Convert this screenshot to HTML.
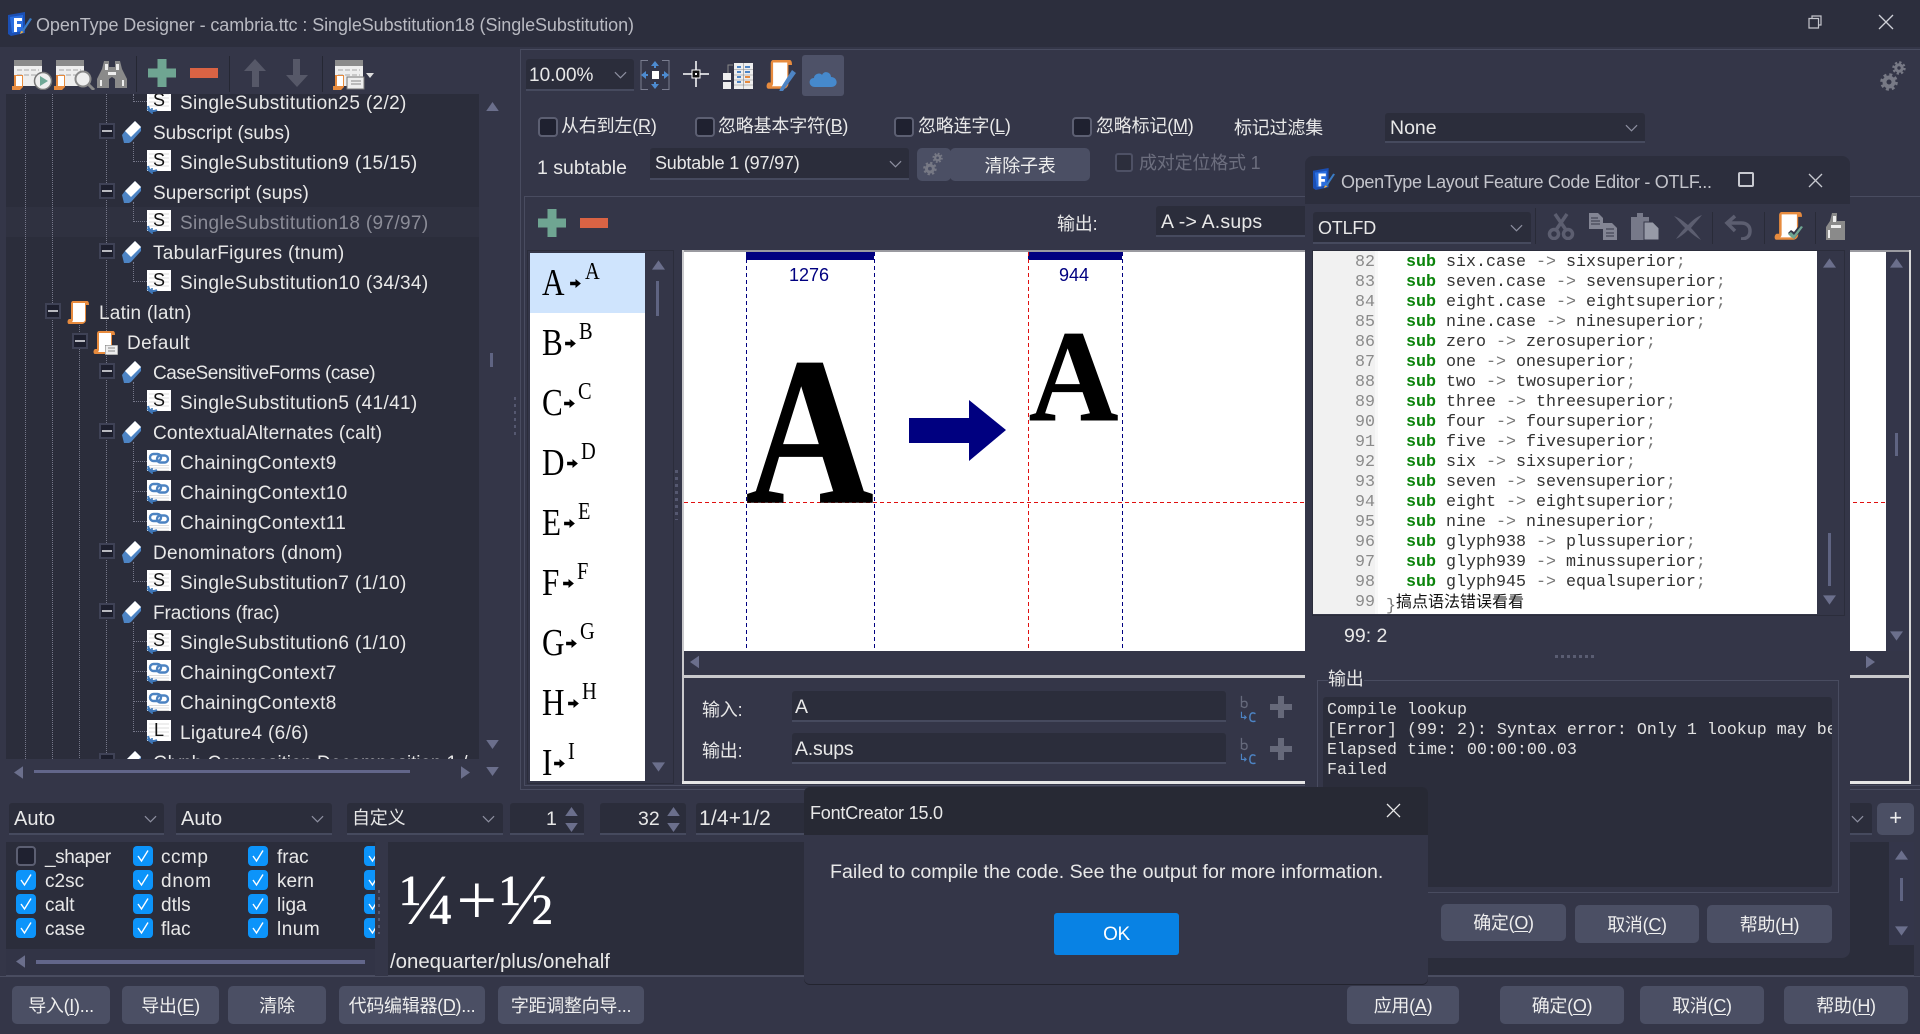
<!DOCTYPE html>
<html><head><meta charset="utf-8"><title>OpenType Designer</title>
<style>
html,body{margin:0;padding:0;width:1920px;height:1034px;overflow:hidden;background:#343648}
*{box-sizing:border-box}
.b,.t,svg.a{position:absolute}
.t{white-space:nowrap;font:18px/24px "Liberation Sans","Noto Sans CJK SC",sans-serif;color:#e8e8e8;letter-spacing:-.2px}
.tr{font-size:19px;letter-spacing:.35px;margin-top:2px}
.c{font-size:19.5px;letter-spacing:0;margin-top:1px}
.d{background:#2b2d3b}
.cb{position:absolute;background:#2b2d3b;border-bottom:2px solid #464a5e;border-radius:3px 3px 0 0}
.btn{position:absolute;background:#4b4f64;border-radius:5px;color:#eee;text-align:center;white-space:nowrap;font:18px/41px "Liberation Sans","Noto Sans CJK SC",sans-serif;letter-spacing:-.3px}
.btn u{text-underline-offset:2px}
.ck{position:absolute;width:20px;height:20px;border-radius:4px;background:#0c94fa}
.ck svg{position:absolute;left:3px;top:3px}
.un{position:absolute;width:20px;height:20px;border-radius:4px;background:#1f2130;border:2px solid #5c5f72}
.ex{position:absolute;width:16px;height:16px;background:#1d1f2e;border:2px solid #3f4256}
.ex:after{content:"";position:absolute;left:1px;top:5px;width:10px;height:2px;background:#b8b9c0}
.dv{position:absolute;width:0;border-left:1px dotted #76788a}
.dh{position:absolute;height:0;border-top:1px dotted #76788a}
.lt{position:absolute;width:14px;text-align:center;font:18px/18px "Liberation Sans",sans-serif;color:#111}
.g{position:absolute;font:38px/40px "Liberation Serif",serif;color:#000;transform:scaleX(.82);transform-origin:0 0}
.s{position:absolute;font:24px/24px "Liberation Serif",serif;color:#000;transform:scaleX(.85);transform-origin:0 0;margin-top:1px}
pre{margin:0;position:absolute;font:16.67px/20px "Liberation Mono",monospace}
pre b{color:#0a830a}
pre i{font-style:normal;color:#777}
</style></head><body>
<svg width="0" height="0" style="position:absolute">
<defs>
<symbol id="chev" viewBox="0 0 14 8"><path d="M1 1l6 6 6-6" fill="none" stroke="#8d8fa0" stroke-width="1.3"/></symbol>
<symbol id="fe" viewBox="0 0 20 24"><path d="M0 15L3 11 13 1l6 6v4L9 22l-2 1H2z" fill="#4d84c4"/><path d="M3 11L13 1l6 6L9 17z" fill="#fff"/></symbol>
<symbol id="lk" viewBox="0 0 25 24"><rect x="1" width="24" height="21" fill="#fff"/><path d="M3 4h20M3 8h20M3 12h20M3 16h20" stroke="#ddd" stroke-width="1"/><path d="M2 16c1 5 5 6 9 4" fill="none" stroke="#3f78ba" stroke-width="2"/><path d="M1 19l5 4v-5" fill="none" stroke="#3f78ba" stroke-width="1.6"/></symbol>
<symbol id="ch" viewBox="0 0 25 24"><rect x="1" width="24" height="21" fill="#fff"/><path d="M3 15.500h20M3 18h20M3 20.500h20" stroke="#ddd" stroke-width="1"/><rect x="4" y="4" width="11" height="7" rx="3.500" fill="none" stroke="#4c83c2" stroke-width="2.400"/><rect x="11" y="5.500" width="11" height="7" rx="3.500" fill="none" stroke="#4c83c2" stroke-width="2.400"/><path d="M2 16c1 5 5 6 9 4" fill="none" stroke="#3f78ba" stroke-width="2"/><path d="M1 19l5 4v-5" fill="none" stroke="#3f78ba" stroke-width="1.6"/></symbol>
<symbol id="sc" viewBox="0 0 22 24" preserveAspectRatio="none"><path d="M6 0h14c2 0 2 3 2 4h-3v15c0 2-2 4-4 4H2c-2 0-2-4 0-5h2V3c0-2 1-3 2-3z" fill="#e78b3e"/><path d="M6 2h12v17c0 1-1 2-2 2H5c1-1 1-2 1-3z" fill="#fff"/></symbol>
<symbol id="win" viewBox="0 0 42 30"><rect x="3" width="28" height="6" fill="#8b8b8b"/><rect x="3" y="6" width="28" height="20" fill="#eee"/><path d="M6 10h22M6 15h22" stroke="#a5a5a5" stroke-dasharray="5 2"/><path d="M3 15h9v12l-3 3H1v-4h2z" fill="#e78b3e"/><path d="M5 16h6v10H5z" fill="#fff"/></symbol>
<symbol id="ck" viewBox="0 0 14 14"><path d="M2 7l3.500 5L12 1.500" fill="none" stroke="#fff" stroke-width="1.400"/></symbol>
<symbol id="tup" viewBox="0 0 14 10"><path d="M7 0l7 10H0z" fill="#6b6f8c"/></symbol>
<symbol id="tdn" viewBox="0 0 14 10"><path d="M7 10L0 0h14z" fill="#6b6f8c"/></symbol>
<symbol id="tlf" viewBox="0 0 10 14"><path d="M0 7l10-7v14z" fill="#6b6f8c"/></symbol>
<symbol id="trt" viewBox="0 0 10 14"><path d="M10 7L0 0v14z" fill="#6b6f8c"/></symbol>
<symbol id="ar" viewBox="0 0 12 10"><path d="M0 3h6V0l6 5-6 5V7H0z" fill="#000"/></symbol>
<symbol id="bc" viewBox="0 0 18 30"><path d="M2 1v12M2 8c2-2 6-2 6 2s-4 4-6 2" fill="none" stroke="#666a7c" stroke-width="1.4"/><path d="M2 18v6h4M5 22l2 2-2 2" fill="none" stroke="#4d84c4" stroke-width="1.2"/><path d="M17 20c-4-2-6 0-6 4s2 5 6 4" fill="none" stroke="#4d84c4" stroke-width="1.6"/></symbol>
<symbol id="pl" viewBox="0 0 22 22"><path d="M8 0h6v8h8v6h-8v8H8v-8H0V8h8z" fill="#66697a"/></symbol>
<symbol id="gear" viewBox="0 0 26 32" fill="none" stroke="#777985"><circle cx="9" cy="22" r="4.500" stroke-width="4"/><circle cx="9" cy="22" r="7.500" stroke-width="2.600" stroke-dasharray="3 2.900"/><circle cx="19" cy="8" r="3.200" stroke-width="3"/><circle cx="19" cy="8" r="5.600" stroke-width="2.200" stroke-dasharray="2.300 2.100"/></symbol>
<symbol id="app" viewBox="0 0 24 24"><path d="M0 3l17-3v21L3 24 0 22z" fill="#1b4fb4"/><path d="M2 5l13-2v16L4 21z" fill="#2a6ee0"/><path d="M6 6h8v3H9v3h4v3H9v5H6z" fill="#fff"/><path d="M14 18l8-12 2 1-8 12-3 2z" fill="#3a7bc4"/><path d="M13 19l3 1-4 2z" fill="#f0b040"/></symbol>
</defs></svg>

<!-- title bar -->
<div class="b" style="left:0;top:0;width:1920px;height:47px;background:#2c2e3d"></div>
<svg class="a" style="left:8px;top:12px" width="24" height="24"><use href="#app"/></svg>
<div class="t" style="left:36px;top:13px;color:#b9bac2;letter-spacing:-.085px">OpenType Designer - cambria.ttc : SingleSubstitution18 (SingleSubstitution)</div>
<svg class="a" style="left:1807px;top:14px" width="16" height="16" fill="none" stroke="#c4c5cc" stroke-width="1.200"><path d="M2 4.500h9.500V14H2zM5 4V2h9v9h-2.500"/></svg>
<svg class="a" style="left:1878px;top:14px" width="16" height="16" fill="none" stroke="#d0d1d8" stroke-width="1.300"><path d="M1 1l14 14M15 1L1 15"/></svg>

<!-- left toolbar -->
<svg class="a" style="left:11px;top:60px" width="42" height="30"><use href="#win"/><circle cx="32" cy="21" r="8.500" fill="#eee" stroke="#777" stroke-width="1.500"/><path d="M29 16l8 5-8 5z" fill="#6fa896"/></svg>
<svg class="a" style="left:53px;top:60px" width="42" height="30"><use href="#win"/><circle cx="30" cy="19" r="7.500" fill="#eee" stroke="#888" stroke-width="2"/><path d="M35 24l6 6" stroke="#888" stroke-width="3"/></svg>
<svg class="a" style="left:97px;top:61px" width="30" height="27"><path d="M7 0h5v6h6V0h5l2 8 5 10v9H18v-9l-3-2-3 2v9H0v-9l5-10z" fill="#8a8a8a"/><path d="M8 3h3v6H8zM19 3h3v6h-3zM3 19h2v6H3zM25 19h2v6h-2zM11 11h8v3h-8z" fill="#eee"/></svg>
<div class="b" style="left:136px;top:56px;width:1px;height:36px;background:#252733"></div>
<svg class="a" style="left:148px;top:59px" width="28" height="28"><path d="M9.500 0h9v9.500H28v9h-9.500V28h-9v-9.500H0v-9h9.500z" fill="#6fa592"/></svg>
<div class="b" style="left:190px;top:68px;width:28px;height:10px;background:#d96344"></div>
<div class="b" style="left:229px;top:56px;width:1px;height:36px;background:#252733"></div>
<svg class="a" style="left:244px;top:59px" width="22" height="28"><path d="M11 0l11 12h-7v16H8V12H0z" fill="#565868"/></svg>
<svg class="a" style="left:286px;top:59px" width="22" height="28"><path d="M11 28L0 16h7V0h7v16h8z" fill="#565868"/></svg>
<div class="b" style="left:322px;top:56px;width:1px;height:36px;background:#252733"></div>
<svg class="a" style="left:332px;top:60px" width="42" height="30"><use href="#win"/><rect x="15" y="17" width="17" height="12" fill="#eee" stroke="#777"/><path d="M19 21h10M19 24h10" stroke="#888"/></svg>
<svg class="a" style="left:366px;top:73px" width="8" height="5"><path d="M0 0h8L4 5z" fill="#ddd"/></svg>

<!-- tree -->
<div class="b d" style="left:6px;top:94px;width:473px;height:665px"></div>
<div class="b" style="left:0;top:0;width:1920px;height:1034px;clip-path:inset(94px 1441px 275px 6px)">
<div class="b" style="left:6px;top:207px;width:473px;height:30px;background:#2f3140"></div>
<div class="dv" style="left:25px;top:94px;height:665px"></div>
<div class="dv" style="left:52px;top:94px;height:665px"></div>
<div class="dv" style="left:79px;top:320px;height:440px"></div>
<div class="dv" style="left:106px;top:94px;height:665px"></div>
<div class="dv" style="left:133px;top:94px;height:8px"></div><div class="dh" style="left:133px;top:101px;width:14px"></div>
<div class="dv" style="left:133px;top:142px;height:20px"></div><div class="dh" style="left:133px;top:161px;width:14px"></div>
<div class="dv" style="left:133px;top:202px;height:20px"></div><div class="dh" style="left:133px;top:221px;width:14px"></div>
<div class="dv" style="left:133px;top:262px;height:20px"></div><div class="dh" style="left:133px;top:281px;width:14px"></div>
<div class="dv" style="left:133px;top:382px;height:20px"></div><div class="dh" style="left:133px;top:401px;width:14px"></div>
<div class="dv" style="left:133px;top:442px;height:80px"></div><div class="dh" style="left:133px;top:461px;width:14px"></div><div class="dh" style="left:133px;top:491px;width:14px"></div><div class="dh" style="left:133px;top:521px;width:14px"></div>
<div class="dv" style="left:133px;top:562px;height:20px"></div><div class="dh" style="left:133px;top:581px;width:14px"></div>
<div class="dv" style="left:133px;top:622px;height:110px"></div><div class="dh" style="left:133px;top:641px;width:14px"></div><div class="dh" style="left:133px;top:671px;width:14px"></div><div class="dh" style="left:133px;top:701px;width:14px"></div><div class="dh" style="left:133px;top:731px;width:14px"></div>

<svg class="a" style="left:146px;top:90px" width="25" height="24"><use href="#lk"/></svg><div class="lt" style="left:152px;top:91px">S</div><div class="t tr" style="left:180px;top:90px">SingleSubstitution25 (2/2)</div>
<div class="ex" style="left:99px;top:123px"></div><svg class="a" style="left:122px;top:120px" width="20" height="24"><use href="#fe"/></svg><div class="t tr" style="left:153px;top:120px;letter-spacing:0">Subscript (subs)</div>
<svg class="a" style="left:146px;top:150px" width="25" height="24"><use href="#lk"/></svg><div class="lt" style="left:152px;top:151px">S</div><div class="t tr" style="left:180px;top:150px">SingleSubstitution9 (15/15)</div>
<div class="ex" style="left:99px;top:183px"></div><svg class="a" style="left:122px;top:180px" width="20" height="24"><use href="#fe"/></svg><div class="t tr" style="left:153px;top:180px;letter-spacing:.1px">Superscript (sups)</div>
<svg class="a" style="left:146px;top:210px" width="25" height="24"><use href="#lk"/></svg><div class="lt" style="left:152px;top:211px">S</div><div class="t tr" style="left:180px;top:210px;color:#8b8c97">SingleSubstitution18 (97/97)</div>
<div class="ex" style="left:99px;top:243px"></div><svg class="a" style="left:122px;top:240px" width="20" height="24"><use href="#fe"/></svg><div class="t tr" style="left:153px;top:240px;letter-spacing:.27px">TabularFigures (tnum)</div>
<svg class="a" style="left:146px;top:270px" width="25" height="24"><use href="#lk"/></svg><div class="lt" style="left:152px;top:271px">S</div><div class="t tr" style="left:180px;top:270px">SingleSubstitution10 (34/34)</div>
<div class="ex" style="left:45px;top:303px"></div><svg class="a" style="left:67px;top:301px" width="22" height="24"><use href="#sc"/></svg><div class="t tr" style="left:99px;top:300px;letter-spacing:.23px">Latin (latn)</div>
<div class="ex" style="left:72px;top:333px"></div><svg class="a" style="left:93px;top:331px" width="22" height="24"><use href="#sc"/></svg><svg class="a" style="left:105px;top:345px" width="13" height="10"><rect width="13" height="10" fill="#eee" stroke="#777"/><path d="M3 3h7M3 6h7" stroke="#888"/></svg><div class="t tr" style="left:127px;top:330px;letter-spacing:.4px">Default</div>
<div class="ex" style="left:99px;top:363px"></div><svg class="a" style="left:122px;top:360px" width="20" height="24"><use href="#fe"/></svg><div class="t tr" style="left:153px;top:360px;letter-spacing:-.45px">CaseSensitiveForms (case)</div>
<svg class="a" style="left:146px;top:390px" width="25" height="24"><use href="#lk"/></svg><div class="lt" style="left:152px;top:391px">S</div><div class="t tr" style="left:180px;top:390px">SingleSubstitution5 (41/41)</div>
<div class="ex" style="left:99px;top:423px"></div><svg class="a" style="left:122px;top:420px" width="20" height="24"><use href="#fe"/></svg><div class="t tr" style="left:153px;top:420px;letter-spacing:.2px">ContextualAlternates (calt)</div>
<svg class="a" style="left:146px;top:450px" width="25" height="24"><use href="#ch"/></svg><div class="t tr" style="left:180px;top:450px">ChainingContext9</div>
<svg class="a" style="left:146px;top:480px" width="25" height="24"><use href="#ch"/></svg><div class="t tr" style="left:180px;top:480px">ChainingContext10</div>
<svg class="a" style="left:146px;top:510px" width="25" height="24"><use href="#ch"/></svg><div class="t tr" style="left:180px;top:510px">ChainingContext11</div>
<div class="ex" style="left:99px;top:543px"></div><svg class="a" style="left:122px;top:540px" width="20" height="24"><use href="#fe"/></svg><div class="t tr" style="left:153px;top:540px;letter-spacing:.32px">Denominators (dnom)</div>
<svg class="a" style="left:146px;top:570px" width="25" height="24"><use href="#lk"/></svg><div class="lt" style="left:152px;top:571px">S</div><div class="t tr" style="left:180px;top:570px">SingleSubstitution7 (1/10)</div>
<div class="ex" style="left:99px;top:603px"></div><svg class="a" style="left:122px;top:600px" width="20" height="24"><use href="#fe"/></svg><div class="t tr" style="left:153px;top:600px;letter-spacing:-.08px">Fractions (frac)</div>
<svg class="a" style="left:146px;top:630px" width="25" height="24"><use href="#lk"/></svg><div class="lt" style="left:152px;top:631px">S</div><div class="t tr" style="left:180px;top:630px">SingleSubstitution6 (1/10)</div>
<svg class="a" style="left:146px;top:660px" width="25" height="24"><use href="#ch"/></svg><div class="t tr" style="left:180px;top:660px">ChainingContext7</div>
<svg class="a" style="left:146px;top:690px" width="25" height="24"><use href="#ch"/></svg><div class="t tr" style="left:180px;top:690px">ChainingContext8</div>
<svg class="a" style="left:146px;top:720px" width="25" height="24"><use href="#lk"/></svg><div class="lt" style="left:152px;top:721px">L</div><div class="t tr" style="left:180px;top:720px">Ligature4 (6/6)</div>
<div class="ex" style="left:99px;top:753px"></div><svg class="a" style="left:122px;top:750px" width="20" height="24"><use href="#fe"/></svg><div class="t tr" style="left:153px;top:750px;letter-spacing:-.1px">Glyph Composition Decomposition 1 /</div>
</div>
<!-- tree scrollbars -->
<svg class="a" style="left:486px;top:102px" width="13" height="9"><use href="#tup"/></svg>
<div class="b" style="left:490px;top:353px;width:3px;height:14px;background:#5f6482"></div>
<svg class="a" style="left:486px;top:740px" width="13" height="9"><use href="#tdn"/></svg>
<svg class="a" style="left:486px;top:767px" width="13" height="9"><use href="#tdn"/></svg>
<svg class="a" style="left:14px;top:766px" width="9" height="13"><use href="#tlf"/></svg>
<div class="b" style="left:34px;top:770px;width:376px;height:3px;background:#62668a"></div>
<svg class="a" style="left:461px;top:766px" width="9" height="13"><use href="#trt"/></svg>
<div class="b" style="left:514px;top:397px;width:2px;height:40px;background:repeating-linear-gradient(#555870 0 3px,transparent 3px 7px)"></div>

<!-- right main panel -->
<div class="b" style="left:520px;top:49px;width:1400px;height:741px;border:1px solid #494c60;border-right:0"></div>
<div class="cb" style="left:526px;top:59px;width:108px;height:32px"></div>
<div class="t c" style="left:529px;top:63px;font-size:19px">10.00%</div>
<svg class="a" style="left:614px;top:71px" width="13" height="8"><use href="#chev"/></svg>
<svg class="a" style="left:640px;top:60px" width="30" height="30"><path d="M8 .500H1V29.500H8M22 .500h7V29.500h-7" fill="none" stroke="#7a7d90"/><rect x="12" y="11" width="7" height="8" fill="#fff"/><path d="M15 1l-4 5h3v2h2V6h3zM15 29l-4-5h3v-2h2v2h3zM1 15l5-4v3h2v2H6v3zM29 15l-5-4v3h-2v2h2v3z" fill="#4d8bd0"/></svg>
<svg class="a" style="left:682px;top:60px" width="28" height="28" fill="none"><path d="M14 1v26M1 14h26" stroke="#fff" stroke-width="1.500"/><rect x="10" y="10" width="8" height="8" fill="#111" stroke="#fff"/><path d="M13 13h2v2h-2z" fill="#fff"/></svg>
<svg class="a" style="left:723px;top:62px" width="30" height="28"><path d="M5 11V3h5" fill="none" stroke="#888"/><rect x="0" y="11" width="8" height="7" fill="#eee"/><rect x="0" y="20" width="8" height="7" fill="#eee"/><rect x="11" y="1" width="19" height="26" fill="#eee"/><path d="M14 5h4M22 5h5M14 10h4M22 10h5M14 15h4M14 20h4" stroke-width="2" stroke="#4d84c4"/><path d="M22 15h5M22 20h5" stroke="#e78b3e" stroke-width="2"/><path d="M20.500 1v26M11 7.500h19M11 13h19M11 18h19M11 23h19" stroke="#888" stroke-width=".6"/></svg>
<svg class="a" style="left:766px;top:60px" width="32" height="31"><use href="#sc" width="26" height="30"/><path d="M14 29l12-19 4 3-13 18-4 1z" fill="#4d84c4"/></svg>
<div class="b" style="left:802px;top:55px;width:42px;height:41px;background:#4e5268;border-radius:3px"></div>
<svg class="a" style="left:809px;top:67px" width="29" height="21"><path d="M6 20c-7 0-7-9-1-9 0-4 6-6 8-3 2-5 9-3 9 2 7 0 8 10 0 10z" fill="#4689cc"/></svg>

<svg class="a" style="left:1880px;top:60px" width="26" height="32"><use href="#gear"/></svg>

<div class="un" style="left:538px;top:117px"></div><div class="t" style="left:561px;top:114px">从右到左(<u>R</u>)</div>
<div class="un" style="left:695px;top:117px"></div><div class="t" style="left:718px;top:114px">忽略基本字符(<u>B</u>)</div>
<div class="un" style="left:894px;top:117px"></div><div class="t" style="left:918px;top:114px">忽略连字(<u>L</u>)</div>
<div class="un" style="left:1072px;top:117px"></div><div class="t" style="left:1096px;top:114px">忽略标记(<u>M</u>)</div>
<div class="t" style="left:1234px;top:116px">标记过滤集</div>
<div class="cb" style="left:1385px;top:113px;width:260px;height:30px"></div>
<div class="t c" style="left:1390px;top:115px">None</div>
<svg class="a" style="left:1625px;top:124px" width="13" height="8"><use href="#chev"/></svg>
<div class="t c" style="left:537px;top:155px">1 subtable</div>
<div class="cb" style="left:650px;top:148px;width:259px;height:32px"></div>
<div class="t" style="left:655px;top:151px">Subtable 1 (97/97)</div>
<svg class="a" style="left:889px;top:160px" width="13" height="8"><use href="#chev"/></svg>
<div class="btn" style="left:917px;top:148px;width:34px;height:33px"></div>
<svg class="a" style="left:923px;top:151px" width="20" height="26"><use href="#gear"/></svg>
<div class="btn" style="left:950px;top:148px;width:140px;height:33px;line-height:36px">清除子表</div>
<div class="b" style="left:1115px;top:153px;width:18px;height:19px;border:2px solid #4e5165;border-radius:3px;background:#2c2e3c"></div>
<div class="t" style="left:1139px;top:151px;color:#6c6e7e">成对定位格式 1</div>

<!-- inner panel -->
<div class="b" style="left:524px;top:196px;width:1396px;height:590px;border:1px solid #494c60;border-right:0"></div>
<svg class="a" style="left:538px;top:209px" width="28" height="28"><path d="M9.500 0h9v9.500H28v9h-9.500V28h-9v-9.500H0v-9h9.500z" fill="#6fa592"/></svg>
<div class="b" style="left:580px;top:218px;width:28px;height:10px;background:#d96344"></div>
<div class="t" style="left:1057px;top:212px">输出:</div>
<div class="cb" style="left:1156px;top:206px;width:200px;height:31px"></div>
<div class="t c" style="left:1161px;top:209px;letter-spacing:.2px">A -&gt; A.sups</div>

<!-- glyph list -->
<div class="b" style="left:527px;top:250px;width:147px;height:534px;border:1px solid #2b2d3b"></div>
<div class="b" style="left:530px;top:253px;width:115px;height:528px;background:#fff;overflow:hidden"></div>
<div class="b" style="left:530px;top:253px;width:115px;height:60px;background:#cfe4fd"></div>
<div class="g" style="left:542px;top:263px">A</div><svg class="a" style="left:570px;top:279px" width="11" height="9"><use href="#ar"/></svg><div class="s" style="left:585px;top:259px">A</div>
<div class="g" style="left:542px;top:323px">B</div><svg class="a" style="left:565px;top:339px" width="11" height="9"><use href="#ar"/></svg><div class="s" style="left:579px;top:319px">B</div>
<div class="g" style="left:542px;top:383px">C</div><svg class="a" style="left:564px;top:399px" width="11" height="9"><use href="#ar"/></svg><div class="s" style="left:578px;top:379px">C</div>
<div class="g" style="left:542px;top:443px">D</div><svg class="a" style="left:567px;top:459px" width="11" height="9"><use href="#ar"/></svg><div class="s" style="left:581px;top:439px">D</div>
<div class="g" style="left:542px;top:503px">E</div><svg class="a" style="left:564px;top:519px" width="11" height="9"><use href="#ar"/></svg><div class="s" style="left:578px;top:499px">E</div>
<div class="g" style="left:542px;top:563px">F</div><svg class="a" style="left:563px;top:579px" width="11" height="9"><use href="#ar"/></svg><div class="s" style="left:577px;top:559px">F</div>
<div class="g" style="left:542px;top:623px">G</div><svg class="a" style="left:566px;top:639px" width="11" height="9"><use href="#ar"/></svg><div class="s" style="left:580px;top:619px">G</div>
<div class="g" style="left:542px;top:683px">H</div><svg class="a" style="left:568px;top:699px" width="11" height="9"><use href="#ar"/></svg><div class="s" style="left:582px;top:679px">H</div>
<div class="g" style="left:542px;top:743px">I</div><svg class="a" style="left:554px;top:759px" width="11" height="9"><use href="#ar"/></svg><div class="s" style="left:568px;top:739px">I</div>
<svg class="a" style="left:652px;top:260px" width="13" height="10"><use href="#tup"/></svg>
<div class="b" style="left:656px;top:281px;width:3px;height:35px;background:#5f6482"></div>
<svg class="a" style="left:652px;top:762px" width="13" height="10"><use href="#tdn"/></svg>
<div class="b" style="left:675px;top:470px;width:3px;height:50px;background:repeating-linear-gradient(#555870 0 3px,transparent 3px 7px)"></div>

<!-- preview -->
<div class="b" style="left:682px;top:250px;width:1228px;height:2px;background:#9a9aa0"></div>
<div class="b" style="left:682px;top:250px;width:2px;height:533px;background:#c9c9cc"></div>
<div class="b" style="left:684px;top:252px;width:1202px;height:399px;background:#fff;overflow:hidden">
 <svg class="a" style="left:0;top:0" width="1202" height="399">
 <rect x="62" y="0" width="128" height="8" fill="#000080"/><rect x="344" y="0" width="94" height="8" fill="#000080"/>
 <path d="M62.500 0V399M190.500 0V399M438.500 0V399" stroke="#000080" stroke-dasharray="4 3"/>
 <path d="M344.500 0V399" stroke="#e01010" stroke-dasharray="4 3"/>
 <path d="M0 250.500H1202" stroke="#e01010" stroke-dasharray="4 3"/>
 <path d="M225 166h60v-18l37 30-37 31v-18h-60z" fill="#000080"/>
 <text x="125" y="29" text-anchor="middle" font-family="Liberation Sans" font-size="18" fill="#000080">1276</text>
 <text x="390" y="29" text-anchor="middle" font-family="Liberation Sans" font-size="18" fill="#000080">944</text>
 <text transform="translate(62,250) scale(.84,1)" font-family="Liberation Serif" font-weight="bold" font-size="210" stroke="#000" stroke-width="1.500">A</text>
 <text transform="translate(345,168) scale(.95,1)" font-family="Liberation Serif" font-weight="bold" font-size="130" stroke="#000" stroke-width="1">A</text>
 </svg>
</div>
<svg class="a" style="left:690px;top:655px" width="9" height="14"><use href="#tlf"/></svg>
<svg class="a" style="left:1866px;top:655px" width="9" height="14"><use href="#trt"/></svg>
<div class="b" style="left:1886px;top:252px;width:24px;height:399px;background:#34364a"></div>
<svg class="a" style="left:1890px;top:258px" width="13" height="10"><use href="#tup"/></svg>
<div class="b" style="left:1895px;top:433px;width:3px;height:23px;background:#5f6482"></div>
<svg class="a" style="left:1890px;top:631px" width="13" height="10"><use href="#tdn"/></svg>
<div class="b" style="left:1909px;top:250px;width:2px;height:533px;background:#d8d8d8"></div>
<div class="b" style="left:684px;top:675px;width:1226px;height:3px;background:#c9c9cc"></div>
<div class="b" style="left:682px;top:781px;width:1229px;height:3px;background:#e6e6e6"></div>
<div class="t" style="left:702px;top:698px">输入:</div>
<div class="cb" style="left:792px;top:691px;width:434px;height:31px"></div>
<div class="t c" style="left:795px;top:694px">A</div>
<svg class="a" style="left:1239px;top:695px" width="18" height="28"><use href="#bc"/></svg>
<svg class="a" style="left:1270px;top:696px" width="22" height="22"><use href="#pl"/></svg>
<div class="t" style="left:702px;top:739px">输出:</div>
<div class="cb" style="left:792px;top:733px;width:434px;height:31px"></div>
<div class="t c" style="left:795px;top:736px;letter-spacing:-.2px">A.sups</div>
<svg class="a" style="left:1239px;top:737px" width="18" height="28"><use href="#bc"/></svg>
<svg class="a" style="left:1270px;top:738px" width="22" height="22"><use href="#pl"/></svg>

<!-- combo row -->
<div class="cb" style="left:9px;top:803px;width:155px;height:32px"></div><div class="t c" style="left:14px;top:806px;font-size:20px">Auto</div><svg class="a" style="left:144px;top:815px" width="13" height="8"><use href="#chev"/></svg>
<div class="cb" style="left:176px;top:803px;width:156px;height:32px"></div><div class="t c" style="left:181px;top:806px;font-size:20px">Auto</div><svg class="a" style="left:311px;top:815px" width="13" height="8"><use href="#chev"/></svg>
<div class="cb" style="left:347px;top:803px;width:156px;height:32px"></div><div class="t" style="left:352px;top:806px">自定义</div><svg class="a" style="left:482px;top:815px" width="13" height="8"><use href="#chev"/></svg>
<div class="cb" style="left:510px;top:803px;width:74px;height:32px"></div><div class="t c" style="left:546px;top:806px">1</div><svg class="a" style="left:565px;top:807px" width="13" height="9"><use href="#tup"/></svg><svg class="a" style="left:565px;top:823px" width="13" height="9"><use href="#tdn"/></svg>
<div class="cb" style="left:600px;top:803px;width:86px;height:32px"></div><div class="t c" style="left:638px;top:806px">32</div><svg class="a" style="left:667px;top:807px" width="13" height="9"><use href="#tup"/></svg><svg class="a" style="left:667px;top:823px" width="13" height="9"><use href="#tdn"/></svg>
<div class="cb" style="left:696px;top:803px;width:1176px;height:32px"></div><div class="t c" style="left:699px;top:806px;font-size:21px;letter-spacing:.2px">1/4+1/2</div><svg class="a" style="left:1851px;top:815px" width="13" height="8"><use href="#chev"/></svg>
<div class="btn" style="left:1877px;top:803px;width:37px;height:32px;line-height:30px;font-size:22px">+</div>

<!-- features -->
<div class="b d" style="left:6px;top:842px;width:369px;height:134px"></div>
<div class="b" style="left:6px;top:949px;width:369px;height:27px;background:#323446;border-bottom:1px solid #494c60"></div>
<div class="un" style="left:16px;top:846px"></div><div class="t c" style="left:45px;top:845px;font-size:19px;letter-spacing:-.4px">_shaper</div>
<div class="ck" style="left:16px;top:870px"><svg width="14" height="14"><use href="#ck"/></svg></div><div class="t c" style="left:45px;top:869px;font-size:19px">c2sc</div>
<div class="ck" style="left:16px;top:894px"><svg width="14" height="14"><use href="#ck"/></svg></div><div class="t c" style="left:45px;top:893px;font-size:19px">calt</div>
<div class="ck" style="left:16px;top:918px"><svg width="14" height="14"><use href="#ck"/></svg></div><div class="t c" style="left:45px;top:917px;font-size:19px">case</div>
<div class="ck" style="left:133px;top:846px"><svg width="14" height="14"><use href="#ck"/></svg></div><div class="t c" style="left:161px;top:845px;font-size:19px;letter-spacing:.5px">ccmp</div>
<div class="ck" style="left:133px;top:870px"><svg width="14" height="14"><use href="#ck"/></svg></div><div class="t c" style="left:161px;top:869px;font-size:19px;letter-spacing:.8px">dnom</div>
<div class="ck" style="left:133px;top:894px"><svg width="14" height="14"><use href="#ck"/></svg></div><div class="t c" style="left:161px;top:893px;font-size:19px">dtls</div>
<div class="ck" style="left:133px;top:918px"><svg width="14" height="14"><use href="#ck"/></svg></div><div class="t c" style="left:161px;top:917px;font-size:19px">flac</div>
<div class="ck" style="left:248px;top:846px"><svg width="14" height="14"><use href="#ck"/></svg></div><div class="t c" style="left:277px;top:845px;font-size:19px">frac</div>
<div class="ck" style="left:248px;top:870px"><svg width="14" height="14"><use href="#ck"/></svg></div><div class="t c" style="left:277px;top:869px;font-size:19px">kern</div>
<div class="ck" style="left:248px;top:894px"><svg width="14" height="14"><use href="#ck"/></svg></div><div class="t c" style="left:277px;top:893px;font-size:19px">liga</div>
<div class="ck" style="left:248px;top:918px"><svg width="14" height="14"><use href="#ck"/></svg></div><div class="t c" style="left:277px;top:917px;font-size:19px;letter-spacing:.5px">lnum</div>
<div class="b" style="left:364px;top:846px;width:11px;height:92px;overflow:hidden">
<div class="ck" style="left:0;top:0"><svg width="14" height="14"><use href="#ck"/></svg></div>
<div class="ck" style="left:0;top:24px"><svg width="14" height="14"><use href="#ck"/></svg></div>
<div class="ck" style="left:0;top:48px"><svg width="14" height="14"><use href="#ck"/></svg></div>
<div class="ck" style="left:0;top:72px"><svg width="14" height="14"><use href="#ck"/></svg></div>
</div>
<svg class="a" style="left:16px;top:955px" width="9" height="13"><use href="#tlf"/></svg>
<div class="b" style="left:36px;top:960px;width:329px;height:4px;background:#62668a"></div>
<div class="b" style="left:378px;top:890px;width:2px;height:44px;background:repeating-linear-gradient(#555870 0 3px,transparent 3px 7px)"></div>
<div class="b d" style="left:388px;top:842px;width:1526px;height:134px;border-bottom:1px solid #494c60"></div>
<div class="t" style="left:400px;top:865px;font:72px/70px 'Liberation Serif',serif;color:#fff;letter-spacing:2.500px">¼+½</div>
<div class="t c" style="left:390px;top:949px;font-size:20.4px">/onequarter/plus/onehalf</div>
<div class="b" style="left:1889px;top:842px;width:25px;height:103px;background:#34364a"></div>
<svg class="a" style="left:1895px;top:850px" width="13" height="10"><use href="#tup"/></svg>
<div class="b" style="left:1900px;top:878px;width:3px;height:23px;background:#5f6482"></div>
<svg class="a" style="left:1895px;top:926px" width="13" height="10"><use href="#tdn"/></svg>

<!-- bottom -->
<div class="b" style="left:0;top:976px;width:1920px;height:1px;background:#4a4d60"></div>
<div class="btn" style="left:12px;top:986px;width:98px;height:38px">导入(<u>I</u>)...</div>
<div class="btn" style="left:122px;top:986px;width:97px;height:38px">导出(<u>E</u>)</div>
<div class="btn" style="left:228px;top:986px;width:98px;height:38px">清除</div>
<div class="btn" style="left:339px;top:986px;width:146px;height:38px">代码编辑器(<u>D</u>)...</div>
<div class="btn" style="left:498px;top:986px;width:146px;height:38px">字距调整向导...</div>
<div class="btn" style="left:1347px;top:986px;width:112px;height:38px">应用(<u>A</u>)</div>
<div class="btn" style="left:1500px;top:986px;width:124px;height:38px">确定(<u>O</u>)</div>
<div class="btn" style="left:1640px;top:986px;width:124px;height:38px">取消(<u>C</u>)</div>
<div class="btn" style="left:1784px;top:986px;width:124px;height:38px">帮助(<u>H</u>)</div>

<!-- editor dialog -->
<div class="b" style="left:1305px;top:156px;width:545px;height:802px;background:#343648;border-radius:8px;overflow:hidden">
 <div class="b" style="left:0;top:0;width:545px;height:48px;background:#2c2e3d"></div>
</div>
<svg class="a" style="left:1313px;top:168px" width="22" height="22"><use href="#app"/></svg>
<div class="t" style="left:1341px;top:170px;color:#c3c4cb;letter-spacing:-.3px">OpenType Layout Feature Code Editor - OTLF...</div>
<div class="b" style="left:1738px;top:172px;width:16px;height:15px;border:2px solid #c8c9d0;border-radius:2px"></div>
<svg class="a" style="left:1808px;top:173px" width="15" height="15" fill="none" stroke="#c8c9d0" stroke-width="1.300"><path d="M1 1l13 13M14 1L1 14"/></svg>
<div class="cb" style="left:1313px;top:212px;width:218px;height:32px"></div>
<div class="t" style="left:1318px;top:216px">OTLFD</div>
<svg class="a" style="left:1510px;top:224px" width="13" height="8"><use href="#chev"/></svg>
<div class="b" style="left:1535px;top:208px;width:1px;height:36px;background:#292b38"></div>
<svg class="a" style="left:1547px;top:213px" width="28" height="27" fill="none" stroke="#5c5e70" stroke-width="3.500"><circle cx="7" cy="21" r="4.500"/><circle cx="21" cy="21" r="4.500"/><path d="M9 17L20 1M19 17L8 1"/></svg>
<svg class="a" style="left:1589px;top:213px" width="28" height="27"><path d="M0 0h9l5 5v11H0z" fill="#838594"/><path d="M2 5h7M2 8h9M2 11h9" stroke="#343648"/><path d="M14 10h9l5 5v12H14z" fill="#838594"/><path d="M17 16h8M17 20h8M17 23h8" stroke="#343648"/></svg>
<svg class="a" style="left:1631px;top:213px" width="28" height="27"><path d="M0 4h6V0h6v4h6v23H0z" fill="#777989"/><path d="M13 9h9l6 6v12H13z" fill="#979aa7" stroke="#343648"/></svg>
<svg class="a" style="left:1674px;top:214px" width="28" height="26"><path d="M0 2c6 2 10 6 14 9 4-4 8-8 14-10-4 5-8 9-11 13 4 4 7 8 10 12-5-3-9-6-13-10-4 4-8 7-12 9 3-4 6-8 9-11C7 10 4 6 0 2z" fill="#5c5e70"/></svg>
<div class="b" style="left:1712px;top:212px;width:1px;height:32px;background:#292b38"></div>
<svg class="a" style="left:1724px;top:214px" width="28" height="26" fill="none" stroke="#5c5e70" stroke-width="3.500"><path d="M11 2L3 9l8 8M3 9h14c6 0 9 3 9 8s-3 8-9 8"/></svg>
<div class="b" style="left:1764px;top:212px;width:1px;height:32px;background:#292b38"></div>
<svg class="a" style="left:1774px;top:212px" width="32" height="30"><use href="#sc" width="28" height="29"/><path d="M14 21l4 4 2 2 11-13-4-3-7 9-3-2z" fill="#343648"/><path d="M14 22l3 3 3 2 9-12-2-1-7 9-3-3z" fill="#6fa592"/></svg>
<div class="b" style="left:1815px;top:212px;width:1px;height:32px;background:#292b38"></div>
<svg class="a" style="left:1826px;top:213px" width="19" height="27"><path d="M6 0h5v8h8v19H0V14l4-6z" fill="#8a8a8a"/><path d="M7 3h3v6H7zM2 17h2v8H2z" fill="#eee"/><path d="M5 12h10v3H5z" fill="#eee"/></svg>
<div class="b" style="left:1312px;top:250px;width:533px;height:366px;border:1px solid #2b2d3b"></div>
<div class="b" style="left:1313px;top:251px;width:504px;height:363px;background:#fff;overflow:hidden">
 <div class="b" style="left:0;top:0;width:65px;height:363px;background:#f1f1f1;border-right:3px solid #f8f8f8"></div>
 <pre style="left:0;top:2px;width:62px;text-align:right;color:#8a8a8a">82
83
84
85
86
87
88
89
90
91
92
93
94
95
96
97
98
99</pre>
 <pre style="left:73px;top:2px;color:#333"><span>  </span><b>sub</b> six.case <i>-&gt;</i> sixsuperior<i>;</i>
  <b>sub</b> seven.case <i>-&gt;</i> sevensuperior<i>;</i>
  <b>sub</b> eight.case <i>-&gt;</i> eightsuperior<i>;</i>
  <b>sub</b> nine.case <i>-&gt;</i> ninesuperior<i>;</i>
  <b>sub</b> zero <i>-&gt;</i> zerosuperior<i>;</i>
  <b>sub</b> one <i>-&gt;</i> onesuperior<i>;</i>
  <b>sub</b> two <i>-&gt;</i> twosuperior<i>;</i>
  <b>sub</b> three <i>-&gt;</i> threesuperior<i>;</i>
  <b>sub</b> four <i>-&gt;</i> foursuperior<i>;</i>
  <b>sub</b> five <i>-&gt;</i> fivesuperior<i>;</i>
  <b>sub</b> six <i>-&gt;</i> sixsuperior<i>;</i>
  <b>sub</b> seven <i>-&gt;</i> sevensuperior<i>;</i>
  <b>sub</b> eight <i>-&gt;</i> eightsuperior<i>;</i>
  <b>sub</b> nine <i>-&gt;</i> ninesuperior<i>;</i>
  <b>sub</b> glyph938 <i>-&gt;</i> plussuperior<i>;</i>
  <b>sub</b> glyph939 <i>-&gt;</i> minussuperior<i>;</i>
  <b>sub</b> glyph945 <i>-&gt;</i> equalsuperior<i>;</i>
<i>}</i><span style="font:16px/20px 'Noto Sans CJK SC',sans-serif;color:#111;position:relative;top:-3px">搞点语法错误看看</span></pre>
</div>
<svg class="a" style="left:1823px;top:258px" width="13" height="10"><use href="#tup"/></svg>
<div class="b" style="left:1828px;top:533px;width:3px;height:53px;background:#5f6482"></div>
<svg class="a" style="left:1823px;top:595px" width="13" height="10"><use href="#tdn"/></svg>
<div class="t c" style="left:1344px;top:623px">99: 2</div>
<div class="b" style="left:1555px;top:655px;width:40px;height:3px;background:repeating-linear-gradient(90deg,#5a5d72 0 3px,transparent 3px 6px)"></div>
<div class="b" style="left:1317px;top:680px;width:522px;height:213px;border:1px solid #494c60"></div>
<div class="t" style="left:1328px;top:667px;background:#343648">输出</div>
<div class="b" style="left:1323px;top:697px;width:509px;height:190px;background:#2b2d3b;border-radius:3px;overflow:hidden">
<pre style="left:4px;top:4px;color:#e2e2e2">Compile lookup
[Error] (99: 2): Syntax error: Only 1 lookup may be specified
Elapsed time: 00:00:00.03
Failed</pre>
</div>
<div class="btn" style="left:1441px;top:904px;width:125px;height:37px;line-height:39px">确定(<u>O</u>)</div>
<div class="btn" style="left:1575px;top:905px;width:124px;height:38px">取消(<u>C</u>)</div>
<div class="btn" style="left:1707px;top:905px;width:125px;height:38px">帮助(<u>H</u>)</div>

<!-- error dialog -->
<div class="b" style="left:804px;top:787px;width:624px;height:197px;background:#343648;border-radius:6px;overflow:hidden;box-shadow:0 1px 0 #23242f">
 <div class="b" style="left:0;top:0;width:624px;height:48px;background:#272934"></div>
</div>
<div class="t" style="left:810px;top:801px">FontCreator 15.0</div>
<svg class="a" style="left:1386px;top:803px" width="15" height="15" fill="none" stroke="#e8e8e8" stroke-width="1.300"><path d="M1 1l13 13M14 1L1 14"/></svg>
<div class="t c" style="left:830px;top:859px;font-size:19.6px">Failed to compile the code. See the output for more information.</div>
<div class="btn" style="left:1054px;top:913px;width:125px;height:42px;background:#0882e4;line-height:44px;color:#fff;border-radius:3px;font-size:19px">OK</div>
</body></html>
